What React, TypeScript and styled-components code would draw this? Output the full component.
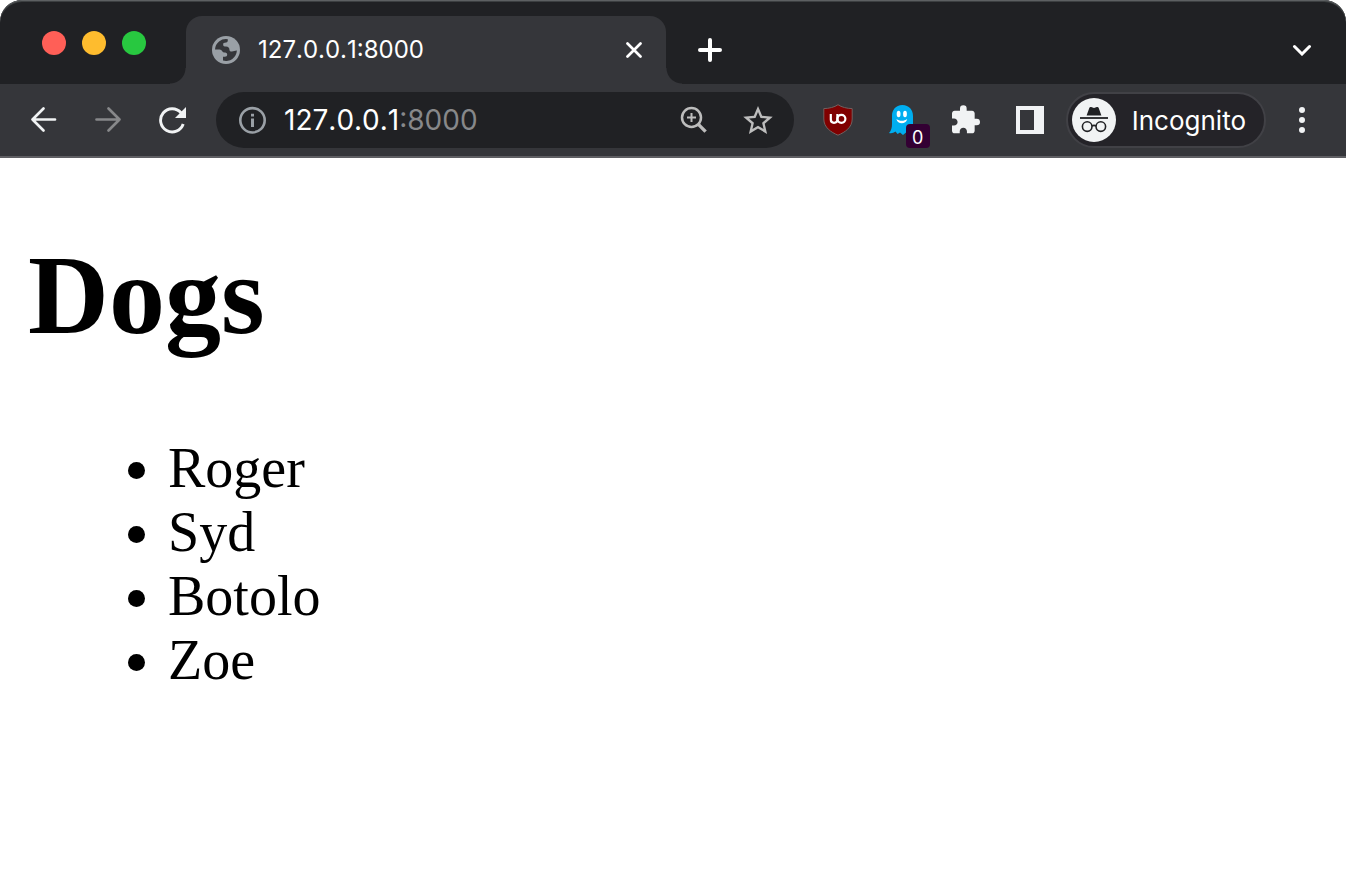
import React from "react";
import styled, { createGlobalStyle } from "styled-components";

const color = {
  frame: "#202124",
  toolbar: "#35363a",
  text: "#ffffff",
  icon: "#f1f3f4",
  muted: "#9aa0a6",
  dim: "#87888a",
  page: "#ffffff",
};

const GlobalStyle = createGlobalStyle`
  * { box-sizing: border-box; }
  body { margin: 0; background: ${color.page}; }
`;

const Browser = styled.div`
  min-height: 100vh;
  display: flex;
  flex-direction: column;
  font-family: Inter, "Liberation Sans", sans-serif;
  color: ${color.text};
`;

const TabStrip = styled.header`
  display: flex;
  align-items: flex-end;
  height: 84px;
  padding: 0 12px 0 42px;
  background: ${color.frame};
  border-radius: 22px 22px 0 0;
  box-shadow: inset 0 2px 0 -1px #5d6062, inset 0 2px 0 #3c3f41;
`;

const WindowControls = styled.div`
  display: flex;
  gap: 16px;
  padding-bottom: 29px;
  margin-right: 40px;
`;

const WindowButton = styled.button<{ $fill: string }>`
  width: 24px;
  height: 24px;
  padding: 0;
  border: 0;
  border-radius: 50%;
  background: ${(p) => p.$fill};
`;

const Tab = styled.div`
  position: relative;
  display: flex;
  align-items: center;
  flex: 0 1 480px;
  height: 68px;
  padding: 0 16px 0 26px;
  background: ${color.toolbar};
  border-radius: 16px 16px 0 0;

  &::before,
  &::after {
    content: "";
    position: absolute;
    bottom: 0;
    width: 16px;
    height: 16px;
  }
  &::before {
    right: 100%;
    background: radial-gradient(circle at 0 0, transparent 15px, ${color.toolbar} 16px);
  }
  &::after {
    left: 100%;
    background: radial-gradient(circle at 100% 0, transparent 15px, ${color.toolbar} 16px);
  }
`;

const TabTitle = styled.span`
  flex: 1;
  margin-left: 18px;
  font-size: 24px;
  line-height: 32px;
  font-kerning: none;
  white-space: nowrap;
`;

const IconButton = styled.button<{ $width?: number; $height?: number }>`
  position: relative;
  display: flex;
  align-items: center;
  justify-content: center;
  flex: none;
  width: ${(p) => p.$width ?? 64}px;
  height: ${(p) => p.$height ?? 56}px;
  padding: 0;
  border: 0;
  background: none;
  color: ${color.icon};
`;

const NewTab = styled(IconButton)`
  margin-left: 12px;
`;

const TabSearch = styled(IconButton)`
  margin-left: auto;
`;

const Toolbar = styled.nav`
  display: flex;
  align-items: center;
  height: 74px;
  padding: 0 12px;
  background: ${color.toolbar};
  border-bottom: 2px solid #5f5f63;
`;

const Omnibox = styled.form`
  display: flex;
  align-items: center;
  flex: 1;
  min-width: 0;
  height: 56px;
  margin: 0 12px;
  padding: 0 4px;
  border-radius: 28px;
  background: ${color.frame};
  font-size: 28px;
  line-height: 36px;
  font-kerning: none;
`;

const Address = styled.input`
  field-sizing: content;
  padding: 0;
  border: 0;
  outline: 0;
  background: none;
  color: ${color.text};
  font: inherit;
  font-kerning: none;
`;

const Port = styled.span`
  flex: 1;
  color: ${color.dim};
`;

const Badge = styled.span`
  position: absolute;
  right: 4px;
  bottom: 0;
  width: 24px;
  height: 24px;
  border-radius: 4px;
  background: #330033;
  color: ${color.text};
  font-family: Inter, sans-serif;
  font-size: 18px;
  line-height: 28px;
  text-align: center;
`;

const Profile = styled.button`
  display: flex;
  align-items: center;
  gap: 16px;
  height: 56px;
  margin: 0 4px;
  padding: 0 18px 0 4px;
  border: 2px solid #414146;
  border-radius: 28px;
  background: #242328;
  color: ${color.text};
  font-family: inherit;
  font-size: 26px;
  line-height: 32px;
`;

const ProfileName = styled.span`
  padding-top: 2px;
`;

const Page = styled.main`
  flex: 1;
  padding: 0 28px;
  background: ${color.page};
  color: #000;
  font-family: "Liberation Serif", serif;
  font-size: 56px;
  line-height: 64px;
`;

const Title = styled.h1`
  margin: 73px 0 77px;
  font-size: 112px;
  line-height: 128px;
`;

const List = styled.ul`
  margin: 0;
  padding-left: 140px;
`;

const Svg = ({
  w = 28,
  h = 28,
  box,
  children,
}: {
  w?: number;
  h?: number;
  box?: string;
  children: React.ReactNode;
}) => (
  <svg width={w} height={h} viewBox={box ?? `0 0 ${w} ${h}`} fill="none" aria-hidden="true">
    {children}
  </svg>
);

const Globe = () => (
  <Svg>
    <circle cx="14" cy="14" r="14" fill={color.muted} />
    <path
      d="M3 13.6A11 11 0 0 1 15.8 3.2V4.6C15.8 6.4 14.6 6.8 12.8 6.8C11.2 6.8 11.2 7.6 11.2 9C11.2 10.4 12.4 10.6 14 10.6C16.4 10.6 17.4 12 17.4 13.4C17.4 15 18.4 15.6 20 15.6C21.6 15.6 22.6 14.6 24.9 14.6A11 11 0 0 1 11 24.6V20.8H12.8C14.4 20.8 15.2 20 15.2 18.6C15.2 17 14 16.6 12 16.6C10.2 16.6 10.2 13.6 7.6 13.6Z"
      fill={color.toolbar}
    />
  </Svg>
);

const Back = () => (
  <Svg>
    <path d="M25 13.5H2.5M13.5 2.5L2.5 13.5L13.5 24.5" stroke="currentColor" strokeWidth="2.7" strokeLinecap="round" strokeLinejoin="round" />
  </Svg>
);

const Forward = () => (
  <Svg>
    <path d="M2.5 13.5H25.5M14.5 2.5L25.5 13.5L14.5 24.5" stroke={color.dim} strokeWidth="2.7" strokeLinecap="round" strokeLinejoin="round" />
  </Svg>
);

const Reload = () => (
  <Svg>
    <path d="M25.2 18A11.6 11.6 0 1 1 23 6.8" stroke="currentColor" strokeWidth="2.9" />
    <path d="M28 1V12H17Z" fill="currentColor" />
  </Svg>
);

const Info = () => (
  <Svg>
    <circle cx="14.5" cy="14.3" r="12.2" stroke={color.muted} strokeWidth="2.6" />
    <path d="M14.5 12.6V21M14.5 7.8V10.4" stroke={color.muted} strokeWidth="3" />
  </Svg>
);

const Magnifier = () => (
  <Svg>
    <circle cx="11.5" cy="11.5" r="9.5" stroke="#bdbdbd" strokeWidth="2.5" />
    <path d="M18.4 18.4L25.6 25.6" stroke="#bdbdbd" strokeWidth="3.4" />
    <path d="M11.5 7V16M7 11.5H16" stroke="#bdbdbd" strokeWidth="2" />
  </Svg>
);

const Star = () => (
  <Svg w={30} h={28} box="2 2 20 19">
    <path
      fill="#bdbdbd"
      d="M22 9.24l-7.19-.62L12 2 9.19 8.63 2 9.24l5.46 4.73L5.82 21 12 17.27 18.18 21l-1.63-7.03L22 9.24zM12 15.4l-3.76 2.27 1-4.28-3.32-2.88 4.38-.38L12 6.1l1.71 4.04 4.38.38-3.32 2.88 1 4.28L12 15.4z"
    />
  </Svg>
);

const Shield = () => (
  <Svg w={30} h={32}>
    <path
      d="M15 .7C11.5 3.2 6 4.5 .8 4.6V15C.8 23.5 8 28.2 15 31.2C22 28.2 29.2 23.5 29.2 15V4.6C24 4.5 18.5 3.2 15 .7Z"
      fill="#800000"
      stroke="#71605f"
      strokeWidth="1"
    />
    <path d="M7.8 10V15.6Q7.8 18.8 11 18.8Q14.4 18.8 14.4 15V10" stroke="#fff" strokeWidth="2.2" />
    <circle cx="18.4" cy="14.8" r="4" stroke="#fff" strokeWidth="2.2" />
  </Svg>
);

const Ghost = () => (
  <Svg w={26} h={32}>
    <path
      d="M13.4 1C6.6 1 3 6 3 12V20C3 24 2.2 26.6 0 29C2.4 29.8 4.4 29 6.4 27.6L8.6 30L11 28.4L14 31L17 28.4L24 29V12C24 6 20.2 1 13.4 1Z"
      fill="#00aef0"
    />
    <ellipse cx="9.6" cy="10" rx="1.9" ry="3.2" fill="#fff" />
    <ellipse cx="16" cy="10" rx="1.9" ry="3.2" fill="#fff" />
    <path d="M7.4 15C10.4 17.4 15.2 17.4 18.2 15C17 20.8 8.6 20.8 7.4 15Z" fill="#fff" />
  </Svg>
);

const Puzzle = () => (
  <Svg w={28} h={30} box="2 1 21 22">
    <path
      fill="currentColor"
      d="M20.5 11H19V7c0-1.1-.9-2-2-2h-4V3.5a2.5 2.5 0 0 0-5 0V5H4c-1.1 0-1.99.9-1.99 2v3.8H3.5c1.49 0 2.7 1.21 2.7 2.7s-1.21 2.7-2.7 2.7H2V20c0 1.1.9 2 2 2h3.8v-1.5c0-1.49 1.21-2.7 2.7-2.7s2.7 1.21 2.7 2.7V22H17c1.1 0 2-.9 2-2v-4h1.5a2.5 2.5 0 0 0 0-5z"
    />
  </Svg>
);

const SidePanel = () => (
  <Svg>
    <path fill="currentColor" fillRule="evenodd" d="M0 0H28V28H0ZM4 4V24H18V4Z" />
  </Svg>
);

const Incognito = () => (
  <Svg w={44} h={44}>
    <circle cx="22" cy="22" r="22" fill={color.icon} />
    <path d="M8 20H36" stroke={color.frame} strokeWidth="1.8" />
    <path d="M14.6 17.4L17.4 9.8C17.7 9 18.4 8.8 19.2 9.1L22 10L24.8 9.1C25.6 8.8 26.3 9 26.6 9.8L29.4 17.4Z" fill={color.frame} />
    <circle cx="15.2" cy="28.6" r="4.8" stroke={color.frame} strokeWidth="1.6" />
    <circle cx="28.8" cy="28.6" r="4.8" stroke={color.frame} strokeWidth="1.6" />
    <path d="M20 28.2Q22 26.6 24 28.2" stroke={color.frame} strokeWidth="1.6" />
  </Svg>
);

const dogs = ["Roger", "Syd", "Botolo", "Zoe"];

export default function App() {
  return (
    <Browser>
      <GlobalStyle />
      <TabStrip>
        <WindowControls>
          <WindowButton $fill="#ff5f57" aria-label="Close window" />
          <WindowButton $fill="#febc2e" aria-label="Minimize window" />
          <WindowButton $fill="#28c840" aria-label="Zoom window" />
        </WindowControls>
        <Tab>
          <Globe />
          <TabTitle>127.0.0.1:8000</TabTitle>
          <IconButton $width={32} $height={32} aria-label="Close tab">
            <Svg w={16} h={16}>
              <path d="M1.5 1.5L14.5 14.5M14.5 1.5L1.5 14.5" stroke="#fff" strokeWidth="2.7" strokeLinecap="round" />
            </Svg>
          </IconButton>
        </Tab>
        <NewTab $height={68} aria-label="New tab">
          <Svg w={24} h={24}>
            <path d="M12 2V22M2 12H22" stroke="#fff" strokeWidth="4" strokeLinecap="round" />
          </Svg>
        </NewTab>
        <TabSearch $height={68} aria-label="Search tabs">
          <Svg w={20} h={12}>
            <path d="M2.5 2.5L10 10L17.5 2.5" stroke="#fff" strokeWidth="3" strokeLinecap="round" />
          </Svg>
        </TabSearch>
      </TabStrip>

      <Toolbar aria-label="Browser toolbar">
        <IconButton aria-label="Back"><Back /></IconButton>
        <IconButton aria-label="Forward"><Forward /></IconButton>
        <IconButton aria-label="Reload"><Reload /></IconButton>
        <Omnibox>
          <IconButton type="button" aria-label="Site information"><Info /></IconButton>
          <Address aria-label="Address" defaultValue="127.0.0.1" />
          <Port>:8000</Port>
          <IconButton type="button" aria-label="Page zoom"><Magnifier /></IconButton>
          <IconButton type="button" aria-label="Bookmark this page"><Star /></IconButton>
        </Omnibox>
        <IconButton aria-label="Content blocker"><Shield /></IconButton>
        <IconButton aria-label="Tracker blocker">
          <Ghost />
          <Badge>0</Badge>
        </IconButton>
        <IconButton aria-label="Extensions"><Puzzle /></IconButton>
        <IconButton aria-label="Side panel"><SidePanel /></IconButton>
        <Profile>
          <Incognito />
          <ProfileName>Incognito</ProfileName>
        </Profile>
        <IconButton aria-label="Menu">
          <Svg w={6} h={26}>
            <circle cx="3" cy="3" r="3" fill="currentColor" />
            <circle cx="3" cy="13" r="3" fill="currentColor" />
            <circle cx="3" cy="23" r="3" fill="currentColor" />
          </Svg>
        </IconButton>
      </Toolbar>

      <Page>
        <Title>Dogs</Title>
        <List>
          {dogs.map((dog) => (
            <li key={dog}>{dog}</li>
          ))}
        </List>
      </Page>
    </Browser>
  );
}
